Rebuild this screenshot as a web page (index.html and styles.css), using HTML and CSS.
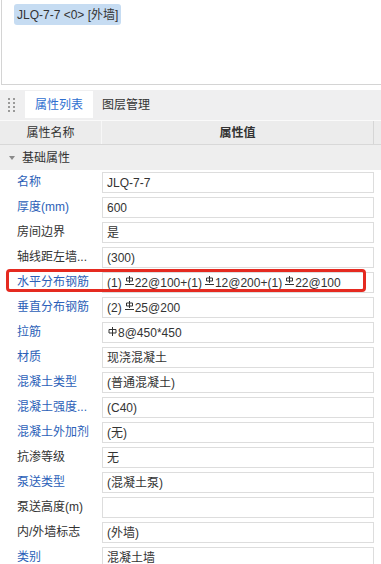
FILE: index.html
```html
<!DOCTYPE html>
<html lang="zh-CN">
<head>
<meta charset="utf-8">
<link rel="stylesheet" href="styles.css">
</head>
<body>
<div class="top"><span class="badge">JLQ-7-7 &lt;0&gt; [外墙]</span></div>
<div class="panel">
  <div class="tabs">
    <div class="grip"><i></i><i></i><i></i><i></i><i></i><i></i><i></i><i></i></div>
    <div class="tab active">属性列表</div>
    <div class="tab">图层管理</div>
  </div>
  <div class="head">
    <div class="hname">属性名称</div>
    <div class="hval">属性值</div>
  </div>
  <div class="group"><span class="caret"></span>基础属性</div>
  <div class="rows">
    <div class="row"><div class="label blue">名称</div><div class="val">JLQ-7-7</div></div>
    <div class="row"><div class="label blue">厚度(mm)</div><div class="val">600</div></div>
    <div class="row"><div class="label">房间边界</div><div class="val">是</div></div>
    <div class="row"><div class="label">轴线距左墙...</div><div class="val">(300)</div></div>
    <div class="row"><div class="label blue">水平分布钢筋</div><div class="val">(1)<svg class="rb" viewBox="0 0 9 9"><path d="M4.5 0V7M1.5 2H7.5V5H1.5ZM0 8.5H9"/></svg>22@100+(1)<svg class="rb" viewBox="0 0 9 9"><path d="M4.5 0V7M1.5 2H7.5V5H1.5ZM0 8.5H9"/></svg>12@200+(1)<svg class="rb" viewBox="0 0 9 9"><path d="M4.5 0V7M1.5 2H7.5V5H1.5ZM0 8.5H9"/></svg>22@100</div></div>
    <div class="row"><div class="label blue">垂直分布钢筋</div><div class="val">(2)<svg class="rb" viewBox="0 0 9 9"><path d="M4.5 0V7M1.5 2H7.5V5H1.5ZM0 8.5H9"/></svg>25@200</div></div>
    <div class="row"><div class="label blue">拉筋</div><div class="val"><svg class="rb1" viewBox="0 0 9 9"><path d="M4.5 0V9M1 2.5H8V6H1Z"/></svg>8@450*450</div></div>
    <div class="row"><div class="label blue">材质</div><div class="val">现浇混凝土</div></div>
    <div class="row"><div class="label blue">混凝土类型</div><div class="val">(普通混凝土)</div></div>
    <div class="row"><div class="label blue">混凝土强度...</div><div class="val">(C40)</div></div>
    <div class="row"><div class="label blue">混凝土外加剂</div><div class="val">(无)</div></div>
    <div class="row"><div class="label">抗渗等级</div><div class="val">无</div></div>
    <div class="row"><div class="label blue">泵送类型</div><div class="val">(混凝土泵)</div></div>
    <div class="row"><div class="label">泵送高度(m)</div><div class="val"></div></div>
    <div class="row"><div class="label">内/外墙标志</div><div class="val">(外墙)</div></div>
    <div class="row"><div class="label blue">类别</div><div class="val">混凝土墙</div></div>
  </div>
  <div class="highlight"></div>
</div>
</body>
</html>
```

FILE: styles.css
```css
html, body {
  margin: 0;
  padding: 0;
  background: #fff;
  overflow: hidden;
}
body {
  width: 381px;
  height: 564px;
  font-family: "Liberation Sans", "Noto Sans CJK SC", sans-serif;
  font-size: 12px;
  color: #333;
  line-height: 1;
}
.top {
  height: 85px;
  margin-left: 1px;
  border-left: 1px solid #d4d4d4;
  border-bottom: 1px solid #d4d4d4;
  box-sizing: border-box;
  padding: 4px 0 0 12px;
}
.badge {
  display: inline-flex;
  align-items: center;
  height: 21px;
  padding: 0 3px;
  background: #c6dcf2;
  border-radius: 3px;
  color: #333;
  white-space: pre;
}
.panel {
  position: relative;
  margin-top: 5px;
}
.tabs {
  height: 30px;
  background: #efeff0;
  display: flex;
  align-items: flex-start;
  padding-top: 1px;
  box-sizing: border-box;
}
.grip {
  width: 7px;
  margin: 7px 10px 0 8px;
  display: grid;
  grid-template-columns: 2px 2px;
  column-gap: 3px;
  row-gap: 2px;
}
.grip i {
  width: 2px;
  height: 2px;
  background: #9a9a9a;
}
.tab {
  height: 27px;
  display: flex;
  align-items: center;
  padding: 0 9px;
  white-space: nowrap;
}
.tab.active {
  background: #fff;
  color: #2f6fd0;
  width: 68px;
  padding: 0;
  box-sizing: border-box;
  justify-content: center;
}
.head {
  display: flex;
  height: 23px;
  border-top: 1px solid #fafafa;
  border-bottom: 1px solid #d8d8d8;
  background: #ececec;
}
.hname {
  width: 101px;
  border-right: 1px solid #f7f7f7;
  display: flex;
  align-items: center;
  justify-content: center;
}
.hval {
  width: 271px;
  border-right: 1px solid #d6d6d6;
  display: flex;
  align-items: center;
  justify-content: center;
  font-weight: bold;
}
.group {
  height: 25px;
  background: #eeeeee;
  display: flex;
  align-items: center;
  padding-left: 9px;
}
.caret {
  width: 0;
  height: 0;
  border-left: 3px solid transparent;
  border-right: 3px solid transparent;
  border-top: 4px solid #8a8a8a;
  margin-right: 7px;
}
.row {
  height: 25px;
  display: flex;
  align-items: flex-start;
}
.label {
  width: 102px;
  box-sizing: border-box;
  padding: 0 2px 0 17px;
  height: 25px;
  line-height: 25px;
  white-space: nowrap;
  overflow: hidden;
}
.label.blue {
  color: #2c5fb8;
}
.val {
  margin-top: 2px;
  width: 272px;
  height: 21px;
  box-sizing: border-box;
  border: 1px solid #dddddd;
  padding-left: 4px;
  display: flex;
  align-items: center;
  white-space: nowrap;
}
.rb {
  width: 9px;
  height: 9px;
  margin: 3px 1px 0 3px;
  align-self: flex-start;
  fill: none;
  stroke: #333;
  stroke-width: 1;
}
.rb1 {
  width: 9px;
  height: 9px;
  margin: 4px 1px 0 1px;
  align-self: flex-start;
  fill: none;
  stroke: #333;
  stroke-width: 1;
}
.highlight {
  position: absolute;
  left: 6px;
  top: 179px;
  width: 360px;
  height: 23px;
  box-sizing: border-box;
  border: 3px solid #e52a20;
  border-radius: 4px;
}
```
